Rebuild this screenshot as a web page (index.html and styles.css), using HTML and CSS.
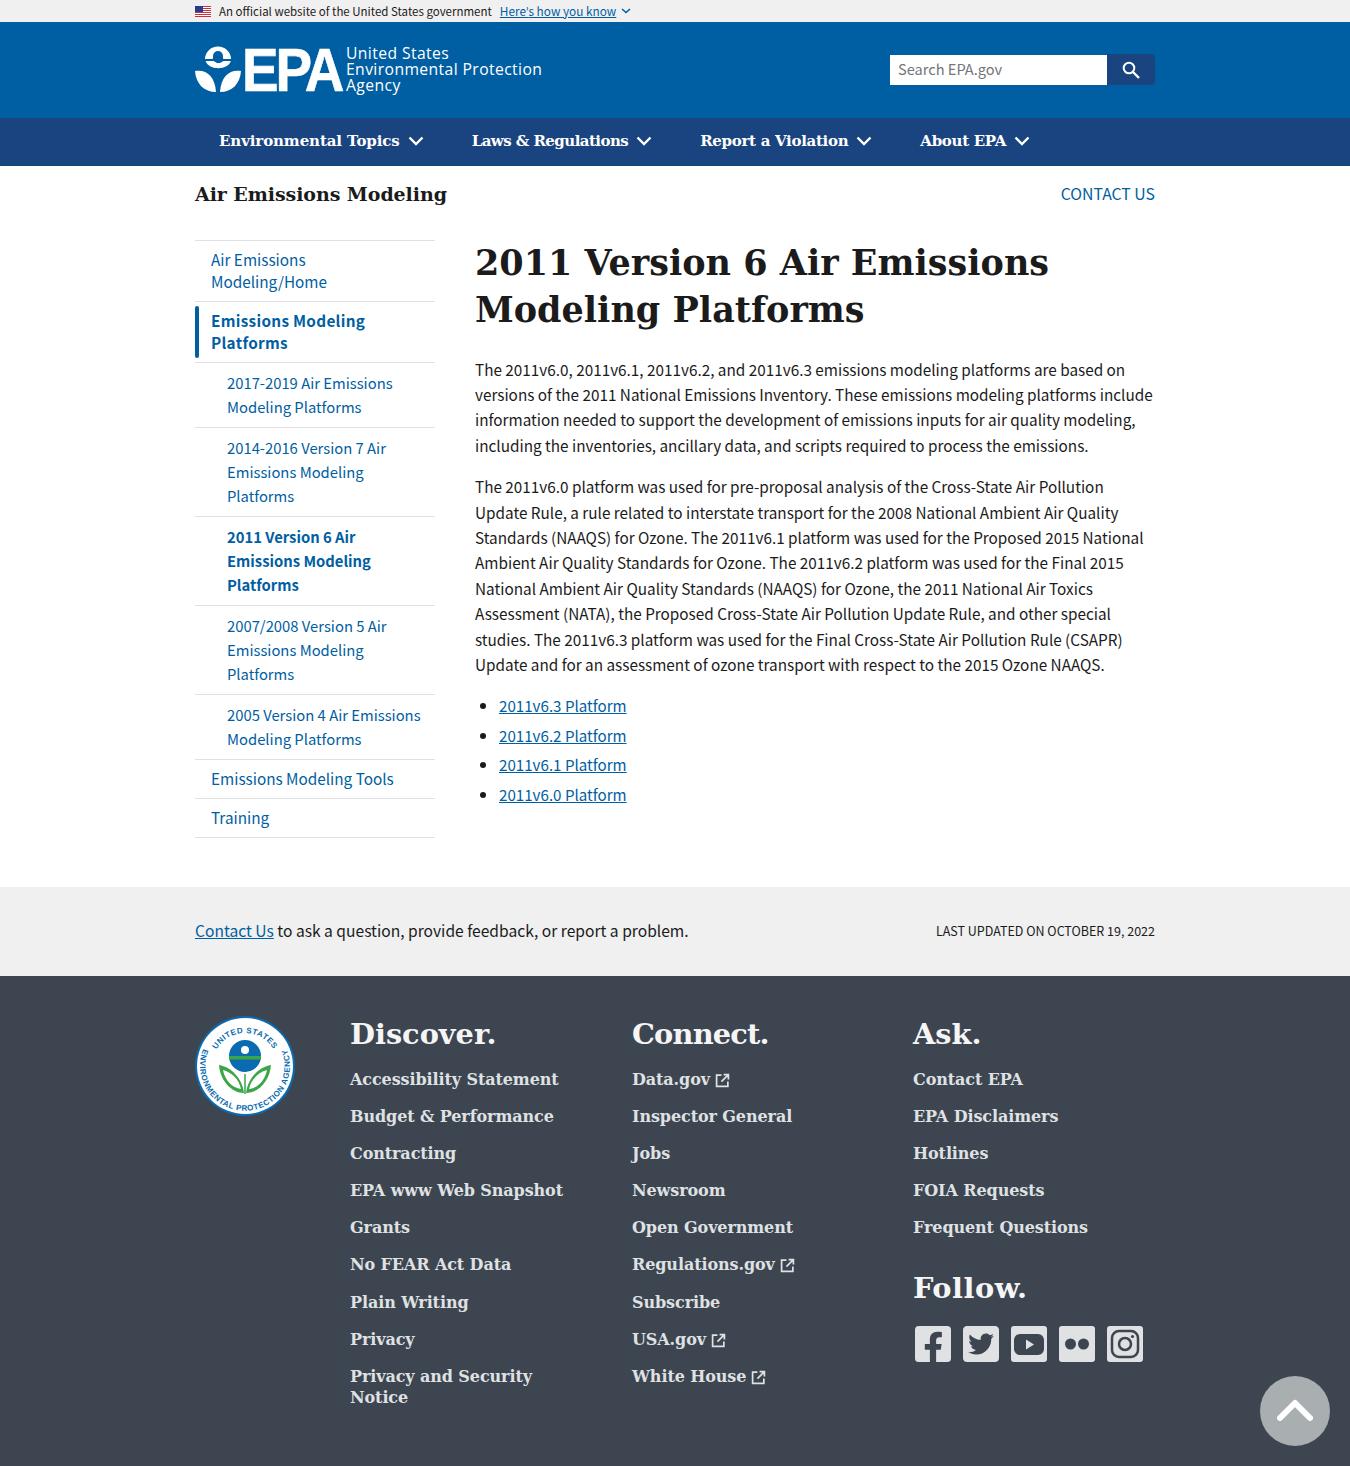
FILE: index.html
```html
<!DOCTYPE html>
<html lang="en">
<head>
<meta charset="utf-8">
<title>2011 Version 6 Air Emissions Modeling Platforms</title>
<link rel="stylesheet" href="styles.css">
</head>
<body>
<div class="banner"><div class="wrap banner-in">
  <svg class="flag" viewBox="0 0 16 11"><rect width="16" height="11" fill="#fff"/><g fill="#c8313e"><rect width="16" height="1"/><rect y="2" width="16" height="1"/><rect y="4" width="16" height="1"/><rect y="6" width="16" height="1"/><rect y="8" width="16" height="1"/><rect y="10" width="16" height="1"/></g><rect width="8" height="6" fill="#2a3a8c"/></svg>
  <span class="banner-text">An official website of the United States government</span>
  <a class="banner-link" href="#">Here<span class="apos">’</span>s how you know</a>
  <svg class="banner-chev" viewBox="0 0 10 6"><path d="M1 1l4 3.5L9 1" fill="none" stroke="#005ea2" stroke-width="1.6"/></svg>
</div></div>

<header class="masthead"><div class="wrap masthead-in">
  <a class="logo" href="#">
    <svg class="logo-mark" viewBox="0 0 46 46"><path d="M10 13a13 12.5 0 0 1 26 0h-7.5c-.8-1-.5-2-.5-3a5 5 0 0 0-10 0c0 1 .3 2-.5 3z" fill="#fff"/><path d="M10.500 15h8l3.500 2h3l3.500-2h7.500a13 9 0 0 1-25.500 0z" fill="#fff"/><path d="M0 25c11-2 20 5 21 21C9 46 1 38 0 25z" fill="#fff"/><path d="M46 25c-11-2-20 5-21 21 12 0 20-8 21-21z" fill="#fff"/></svg>
    <span class="logo-epa"><span class="logo-epa-in">EPA</span></span>
    <span class="logo-name"><span>United States</span><span>Environmental Protection</span><span>Agency</span></span>
  </a>
  <form class="search">
    <div class="search-input">Search EPA.gov</div>
    <div class="search-btn"><svg viewBox="0 0 20 20" class="search-ico"><circle cx="8" cy="8" r="5.300" fill="none" stroke="#fff" stroke-width="2"/><path d="M12 12l6 6" stroke="#fff" stroke-width="2.400"/></svg></div>
  </form>
</div></header>

<nav class="mainnav"><div class="wrap mainnav-in">
  <a class="nav-item" href="#">Environmental Topics<svg class="nav-chev" viewBox="0 0 16 10"><path d="M1.500 1.500L8 8l6.500-6.500" fill="none" stroke="#fff" stroke-width="2.400"/></svg></a>
  <a class="nav-item" href="#">Laws &amp; Regulations<svg class="nav-chev" viewBox="0 0 16 10"><path d="M1.500 1.500L8 8l6.500-6.500" fill="none" stroke="#fff" stroke-width="2.400"/></svg></a>
  <a class="nav-item" href="#">Report a Violation<svg class="nav-chev" viewBox="0 0 16 10"><path d="M1.500 1.500L8 8l6.500-6.500" fill="none" stroke="#fff" stroke-width="2.400"/></svg></a>
  <a class="nav-item" href="#">About EPA<svg class="nav-chev" viewBox="0 0 16 10"><path d="M1.500 1.500L8 8l6.500-6.500" fill="none" stroke="#fff" stroke-width="2.400"/></svg></a>
</div></nav>

<div class="wrap titlebar">
  <div class="site-title">Air Emissions Modeling</div>
  <a class="contact-top" href="#">CONTACT US</a>
</div>

<div class="wrap content">
  <aside class="side">
    <a class="side-item" href="#">Air Emissions Modeling/Home</a>
    <a class="side-item side-current" href="#">Emissions Modeling Platforms</a>
    <a class="side-sub" href="#">2017-2019 Air Emissions Modeling Platforms</a>
    <a class="side-sub" href="#">2014-2016 Version 7 Air Emissions Modeling Platforms</a>
    <a class="side-sub side-sub-current" href="#">2011 Version 6 Air Emissions Modeling Platforms</a>
    <a class="side-sub" href="#">2007/2008 Version 5 Air Emissions Modeling Platforms</a>
    <a class="side-sub" href="#">2005 Version 4 Air Emissions Modeling Platforms</a>
    <a class="side-item" href="#">Emissions Modeling Tools</a>
    <a class="side-item" href="#">Training</a>
  </aside>
  <main class="main">
    <h1 class="page-title">2011 Version 6 Air Emissions Modeling Platforms</h1>
    <p class="para">The 2011v6.0, 2011v6.1, 2011v6.2, and 2011v6.3 emissions modeling platforms are based on versions of the 2011 National Emissions Inventory. These emissions modeling platforms include information needed to support the development of emissions inputs for air quality modeling, including the inventories, ancillary data, and scripts required to process the emissions.</p>
    <p class="para">The 2011v6.0 platform was used for pre-proposal analysis of the Cross-State Air Pollution Update Rule, a rule related to interstate transport for the 2008 National Ambient Air Quality Standards (NAAQS) for Ozone. The 2011v6.1 platform was used for the Proposed 2015 National Ambient Air Quality Standards for Ozone. The 2011v6.2 platform was used for the Final 2015 National Ambient Air Quality Standards (NAAQS) for Ozone, the 2011 National Air Toxics Assessment (NATA), the Proposed Cross-State Air Pollution Update Rule, and other special studies. The 2011v6.3 platform was used for the Final Cross-State Air Pollution Rule (CSAPR) Update and for an assessment of ozone transport with respect to the 2015 Ozone NAAQS.</p>
    <ul class="links">
      <li><a href="#">2011v6.3 Platform</a></li>
      <li><a href="#">2011v6.2 Platform</a></li>
      <li><a href="#">2011v6.1 Platform</a></li>
      <li><a href="#">2011v6.0 Platform</a></li>
    </ul>
  </main>
</div>

<div class="prefooter"><div class="wrap prefooter-in">
  <div class="pf-text"><a href="#">Contact Us</a> to ask a question, provide feedback, or report a problem.</div>
  <div class="pf-date">LAST UPDATED ON OCTOBER 19, 2022</div>
</div></div>

<footer class="footer"><div class="wrap footer-in">
  <div class="seal-col">
    <svg class="seal" viewBox="0 0 100 100">
      <defs>
        <path id="arcTop" d="M17 50a33 33 0 0 1 66 0"/>
        <path id="arcBottom" d="M9.600 30A45 45 0 1 0 90.400 30"/>
      </defs>
      <circle cx="50" cy="50" r="50" fill="#0a6bb0"/>
      <circle cx="50" cy="50" r="48" fill="#fff"/>
      <text class="seal-text"><textPath href="#arcTop" startOffset="50%" text-anchor="middle">UNITED STATES</textPath></text>
      <text class="seal-text"><textPath href="#arcBottom" startOffset="50%" text-anchor="middle">ENVIRONMENTAL PROTECTION AGENCY</textPath></text>
      <circle cx="50" cy="40" r="16" fill="#0a6bb0"/>
      <circle cx="50" cy="34" r="4" fill="#fff"/>
      <rect x="34" y="40" width="32" height="3.500" fill="#3aa648"/>
      <path d="M50 78V58" stroke="#3aa648" stroke-width="1.500"/>
      <path d="M49 77C47 62 36 51 24 49c1 15 12 28 25 28z" fill="#3aa648"/>
      <path d="M51 77c2-15 13-26 25-28-1 15-12 28-25 28z" fill="#3aa648"/>
      <path d="M46 73C44 63 36 56 28 54c2 10 9 18 18 19z" fill="#fff"/>
      <path d="M54 73c2-10 10-17 18-19-2 10-9 18-18 19z" fill="#fff"/>
    </svg>
  </div>
  <div class="f-col f-col-1">
    <h2 class="f-head">Discover.</h2>
    <a class="f-link" href="#">Accessibility Statement</a>
    <a class="f-link" href="#">Budget &amp; Performance</a>
    <a class="f-link" href="#">Contracting</a>
    <a class="f-link" href="#">EPA www Web Snapshot</a>
    <a class="f-link" href="#">Grants</a>
    <a class="f-link" href="#">No FEAR Act Data</a>
    <a class="f-link" href="#">Plain Writing</a>
    <a class="f-link" href="#">Privacy</a>
    <a class="f-link" href="#">Privacy and Security Notice</a>
  </div>
  <div class="f-col f-col-2">
    <h2 class="f-head">Connect.</h2>
    <a class="f-link" href="#">Data.gov<svg class="ext" viewBox="0 0 14 14"><path d="M6 2H1.500v10.500H12V8M8 1.500h4.500V6M12.500 1.500L6 8" fill="none" stroke="#dfe1e2" stroke-width="1.600"/></svg></a>
    <a class="f-link" href="#">Inspector General</a>
    <a class="f-link" href="#">Jobs</a>
    <a class="f-link" href="#">Newsroom</a>
    <a class="f-link" href="#">Open Government</a>
    <a class="f-link" href="#">Regulations.gov<svg class="ext" viewBox="0 0 14 14"><path d="M6 2H1.500v10.500H12V8M8 1.500h4.500V6M12.500 1.500L6 8" fill="none" stroke="#dfe1e2" stroke-width="1.600"/></svg></a>
    <a class="f-link" href="#">Subscribe</a>
    <a class="f-link" href="#">USA.gov<svg class="ext" viewBox="0 0 14 14"><path d="M6 2H1.500v10.500H12V8M8 1.500h4.500V6M12.500 1.500L6 8" fill="none" stroke="#dfe1e2" stroke-width="1.600"/></svg></a>
    <a class="f-link" href="#">White House<svg class="ext" viewBox="0 0 14 14"><path d="M6 2H1.500v10.500H12V8M8 1.500h4.500V6M12.500 1.500L6 8" fill="none" stroke="#dfe1e2" stroke-width="1.600"/></svg></a>
  </div>
  <div class="f-col f-col-3">
    <h2 class="f-head">Ask.</h2>
    <a class="f-link" href="#">Contact EPA</a>
    <a class="f-link" href="#">EPA Disclaimers</a>
    <a class="f-link" href="#">Hotlines</a>
    <a class="f-link" href="#">FOIA Requests</a>
    <a class="f-link" href="#">Frequent Questions</a>
    <h2 class="f-head f-follow">Follow.</h2>
    <div class="social">
      <svg class="soc" viewBox="0 32 448 448"><path fill="#dfe1e2" d="M400 32H48A48 48 0 0 0 0 80v352a48 48 0 0 0 48 48h137.250V327.690h-63V256h63v-54.640c0-62.150 37-96.480 93.670-96.480 27.140 0 55.520 4.840 55.520 4.840v61h-31.270c-30.810 0-40.420 19.120-40.420 38.730V256h68.780l-11 71.690h-57.780V480H400a48 48 0 0 0 48-48V80a48 48 0 0 0-48-48z"/></svg>
      <svg class="soc" viewBox="0 32 448 448"><path fill="#dfe1e2" d="M400 32H48C21.500 32 0 53.500 0 80v352c0 26.500 21.500 48 48 48h352c26.500 0 48-21.500 48-48V80c0-26.500-21.500-48-48-48zm-48.900 158.800c.2 2.800.2 5.700.2 8.500 0 86.700-66 186.600-186.600 186.600-37.200 0-71.700-10.800-100.700-29.400 5.300.6 10.400.8 15.800.8 30.700 0 58.900-10.400 81.400-28-28.800-.6-53-19.500-61.300-45.500 10.100 1.500 19.200 1.500 29.600-1.200-30-6.100-52.500-32.500-52.500-64.400v-.8c8.700 4.900 18.900 7.900 29.600 8.300a65.447 65.447 0 0 1-29.200-54.600c0-12.200 3.200-23.400 8.900-33.100 32.300 39.800 80.800 65.800 135.200 68.600-9.300-44.500 24-80.600 64-80.600 18.900 0 35.900 7.900 47.900 20.700 14.800-2.800 29-8.300 41.600-15.800-4.900 15.200-15.200 28-28.800 36.100 13.200-1.400 26-5.100 37.800-10.200-8.900 13.100-20.100 24.700-32.900 34z"/></svg>
      <svg class="soc" viewBox="0 0 36 36"><rect width="36" height="36" rx="3" fill="#dfe1e2"/><rect x="3" y="8" width="30" height="21" rx="6" fill="#3d4551"/><path d="M15 13.500v10l8-5z" fill="#dfe1e2"/></svg>
      <svg class="soc" viewBox="0 0 36 36"><rect width="36" height="36" rx="3" fill="#dfe1e2"/><circle cx="11.500" cy="18" r="5.500" fill="#3d4551"/><circle cx="24.500" cy="18" r="5.500" fill="#3d4551"/></svg>
      <svg class="soc" viewBox="0 0 36 36"><rect width="36" height="36" rx="3" fill="#dfe1e2"/><rect x="5" y="5" width="26" height="26" rx="7" fill="none" stroke="#3d4551" stroke-width="2.500"/><circle cx="18" cy="18" r="6" fill="none" stroke="#3d4551" stroke-width="2.500"/><circle cx="25.500" cy="10.500" r="1.600" fill="#3d4551"/></svg>
    </div>
  </div>
</div></footer>

<a class="to-top" href="#"><svg class="to-top-ico" viewBox="0 0 36 24"><path d="M3 20L18 5l15 15" fill="none" stroke="#fff" stroke-width="6" stroke-linecap="round" stroke-linejoin="round"/></svg></a>
</body>
</html>
```

FILE: styles.css
```css
* { box-sizing: border-box; }
html, body { margin: 0; padding: 0; }
body {
  position: relative;
  height: 1466px;
  overflow: hidden;
  background: #fff;
  color: #1b1b1b;
  font-family: "Noto Sans CJK SC", "Lato", sans-serif;
  font-size: 15px;
}
a { color: #005ea2; text-decoration: none; }
.wrap { width: 960px; margin: 0 auto; }

.banner { height: 22px; background: #f0f0f0; }
.banner-in { display: flex; align-items: center; height: 22px; font-size: 11.500px; }
.flag { width: 16px; height: 11px; margin-right: 8px; }
.banner-text { margin-right: 8px; }
.banner-link { text-decoration: underline; font-size: 11.800px; margin-top: -2px; }
.apos { font-family: "Lato", sans-serif; }
.banner-chev { width: 10px; height: 6px; margin-left: 5px; }

.masthead { height: 96px; background: #005ea2; }
.masthead-in { display: flex; align-items: center; justify-content: space-between; height: 96px; }
.logo { display: flex; align-items: center; color: #fff; height: 50px; }
.logo-mark { width: 46px; height: 46px; margin-top: -2px; }
.logo-epa {
  display: block;
  font-family: "Liberation Sans", sans-serif;
  font-weight: 700;
  font-size: 61px;
  line-height: 46px;
  margin-left: 1px;
  width: 104px;
  flex: none;
}
.logo-epa-in {
  display: inline-block;
  transform: scaleX(.9);
  transform-origin: left center;
  letter-spacing: -3.500px;
  -webkit-text-stroke: .6px #fff;
}
.logo-name {
  display: flex;
  flex-direction: column;
  font-family: "Open Sans", sans-serif;
  font-size: 15.700px;
  line-height: 16px;
  letter-spacing: .4px;
  font-weight: 400;
  margin-top: -3px;
}
.search { display: flex; height: 32px; }
.search-input {
  width: 217px;
  height: 30px;
  margin-top: 1px;
  background: #fff;
  color: #71767a;
  font-size: 14.600px;
  line-height: 28px;
  padding-left: 8px;
}
.search-btn {
  width: 48px;
  height: 31px;
  background: #1a4480;
  border-radius: 0 4px 4px 0;
  display: flex;
  align-items: center;
  justify-content: center;
}
.search-ico { width: 20px; height: 20px; }

.mainnav { height: 48px; background: #1a4480; }
.mainnav-in { display: flex; height: 48px; }
.nav-item {
  display: flex;
  align-items: center;
  padding: 0 24px;
  color: #fff;
  font-family: "DejaVu Serif", serif;
  font-weight: 700;
  font-size: 15px;
  letter-spacing: -.1px;
  height: 46px;
}
.nav-item:nth-child(2) { letter-spacing: -.55px; }
.nav-item:nth-child(3) { letter-spacing: -.3px; }
.nav-item:nth-child(4) { letter-spacing: -.3px; }
.nav-chev { width: 16px; height: 10px; margin-left: 8px; }

.titlebar { display: flex; align-items: center; justify-content: space-between; height: 56px; }
.site-title {
  font-family: "DejaVu Serif", serif;
  font-weight: 700;
  font-size: 19px;
  letter-spacing: -.07px;
  color: #1b1b1b;
}
.contact-top { font-size: 15.800px; margin-bottom: 2px; }

.content { display: flex; gap: 40px; padding-top: 18px; height: 665px; }
.side { width: 240px; flex: none; border-top: 1px solid #dfe1e2; display: flex; flex-direction: column; }
.side-item, .side-sub {
  display: block;
  border-bottom: 1px solid #dfe1e2;
  position: relative;
  padding: 7px 16px 9px;
  font-size: 15.300px;
  line-height: 22px;
}
.side-sub { padding: 8px 10px 8px 32px; font-size: 14.800px; line-height: 24px; }
.side-current { font-weight: 700; letter-spacing: .3px; }
.side-current::before {
  content: "";
  position: absolute;
  left: 0;
  top: 4px;
  bottom: 4px;
  width: 4px;
  border-radius: 4px;
  background: #005ea2;
}
.side-sub-current { font-weight: 700; }

.main { width: 680px; flex: none; }
.page-title {
  margin: -1px 0 23.500px;
  font-family: "DejaVu Serif", serif;
  font-weight: 700;
  font-size: 35px;
  line-height: 47px;
  color: #1b1b1b;
}
.para { margin: 0 0 16px; font-size: 15.300px; line-height: 25.400px; }
.links { margin: 0; padding-left: 24px; font-size: 15.150px; line-height: 25.400px; }
.links li { margin-bottom: 4px; }
.links a { text-decoration: underline; }

.prefooter { height: 89px; background: #f0f0f0; }
.prefooter-in { display: flex; align-items: center; justify-content: space-between; height: 86px; }
.pf-text { font-size: 15.600px; }
.pf-text a { text-decoration: underline; }
.pf-date { font-size: 12.500px; }

.footer { height: 490px; background: #3d4551; color: #dfe1e2; }
.footer-in { display: flex; padding-top: 40px; }
.seal-col { width: 155px; flex: none; }
.seal { display: block; width: 100px; height: 100px; }
.seal-text {
  font-family: "Liberation Sans", sans-serif;
  font-size: 8px;
  font-weight: 700;
  letter-spacing: .5px;
  fill: #0a6bb0;
}
.f-col { display: flex; flex-direction: column; align-items: flex-start; flex: none; }
.f-col-1 { width: 282px; padding-right: 40px; }
.f-col-2 { width: 281px; }
.f-col-3 { width: 242px; }
.f-head {
  margin: 0 0 17px;
  font-family: "DejaVu Serif", serif;
  font-weight: 700;
  font-size: 28.800px;
  line-height: 36px;
  color: #fff;
  opacity: .95;
}
.f-col-2 .f-head { letter-spacing: -.8px; }
.f-follow { margin-top: 16px; margin-bottom: 0; letter-spacing: .5px; }
.f-link {
  display: block;
  color: #dfe1e2;
  font-family: "DejaVu Serif", serif;
  font-weight: 700;
  font-size: 16px;
  letter-spacing: -.1px;
  line-height: 21px;
  margin-bottom: 16.100px;
}
.ext { width: 15px; height: 15px; margin-left: 5px; vertical-align: -3px; }
.social { display: flex; gap: 12px; padding: 20px 0 0 2px; }
.soc { width: 36px; height: 36px; display: block; }

.to-top {
  position: absolute;
  left: 1260px;
  top: 1376px;
  width: 70px;
  height: 70px;
  border-radius: 50%;
  background: #a9aeb1;
  display: flex;
  align-items: center;
  justify-content: center;
}
.to-top-ico { width: 36px; height: 24px; margin-bottom: 2px; }
```
